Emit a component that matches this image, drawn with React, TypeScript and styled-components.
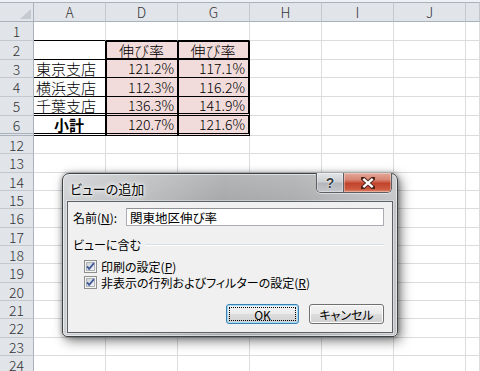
import React from 'react';
import styled, { createGlobalStyle } from 'styled-components';

const Global = createGlobalStyle`
  html, body { margin: 0; padding: 0; background: #fff; }
  body { width: 480px; height: 371px; overflow: hidden; font-family: "Noto Sans CJK JP", "Noto Sans", sans-serif; }
  #root { width: 480px; height: 371px; }
`;

const GRID = '#dadcdd';
const INK = '#000';
const PINK = '#f2dcdb';

const Page = styled.div`
  position: relative;
  width: 480px;
  height: 371px;
  overflow: hidden;
  background: #fff;
`;

const TopBand = styled.div`
  height: 2px;
  background: #eef1f5;
`;

const Sheet = styled.div`
  display: grid;
  grid-template-columns: 34px repeat(6, 72px) 1fr;
  grid-template-rows: 20px 19px 19px 18px 19px 19px 20px 18px 19px 18px 18px 19px 18px 18px 19px 18px 18px 19px 18px 18px;
`;

const HeadCell = styled.div<{ $first?: boolean }>`
  box-sizing: border-box;
  background: #e1e5ea;
  border-top: 1px solid #a9b1bb;
  border-bottom: 1px solid #a9b1bb;
  border-right: 1px solid ${p => (p.$first ? '#a9b1bb' : '#c3c8cf')};
  display: flex;
  align-items: center;
  justify-content: center;
  font-family: "Noto Sans CJK JP", sans-serif;
  font-size: 14px;
  line-height: 16px;
  font-weight: 300;
  color: #333;
`;

const Corner = styled(HeadCell)`
  align-items: flex-end;
  justify-content: flex-end;
  padding: 0 2px 2px 0;
`;

const RowHead = styled.div<{ $double?: boolean }>`
  box-sizing: border-box;
  background: #e1e5ea;
  border-right: 1px solid #a9b1bb;
  border-bottom: ${p => (p.$double ? '3px double #a9b1bb' : '1px solid #c3c8cf')};
  display: flex;
  align-items: center;
  justify-content: center;
  padding-top: 1px;
  font-family: "Noto Sans CJK JP", sans-serif;
  font-size: 14px;
  line-height: 15px;
  font-weight: 300;
  color: #333;
`;

const Cell = styled.div<{
  $t?: string;
  $r?: string;
  $b?: string;
  $l?: string;
  $fill?: string;
  $align?: string;
  $bold?: boolean;
  $num?: boolean;
}>`
  box-sizing: border-box;
  min-width: 0;
  border-top: ${p => p.$t ?? 'none'};
  border-left: ${p => p.$l ?? 'none'};
  border-right: ${p => p.$r ?? `1px solid ${GRID}`};
  border-bottom: ${p => p.$b ?? `1px solid ${GRID}`};
  background: ${p => p.$fill ?? '#fff'};
  display: flex;
  align-items: center;
  justify-content: ${p => p.$align ?? 'flex-start'};
  padding: 0 3px 0 2px;
  font-family: "Noto Sans CJK JP", sans-serif;
  font-size: ${p => (p.$num ? '14px' : '15px')};
  font-weight: ${p => (p.$bold ? 700 : 300)};
  color: #000;
  white-space: nowrap;
  line-height: 15px;
`;

/* ---------- dialog ---------- */

const Dialog = styled.div`
  position: absolute;
  left: 62px;
  top: 173px;
  width: 336px;
  height: 164px;
  box-sizing: border-box;
  border: 1px solid #404346;
  border-radius: 7px 7px 5px 5px;
  background:
    linear-gradient(180deg, rgba(255,255,255,0.18) 0%, rgba(255,255,255,0) 20%),
    linear-gradient(90deg, #cdd0d2 0%, #bfc1c3 18%, #a4a6a8 48%, #a9abad 70%, #c3c5c7 100%);
  box-shadow:
    inset 0 0 0 1px rgba(255, 255, 255, 0.55),
    3px 4px 12px rgba(0, 0, 0, 0.5),
    0 0 5px rgba(0, 0, 0, 0.35);
  padding: 0 4px 3px 4px;
  display: flex;
  flex-direction: column;
  font-family: "Noto Sans CJK JP", sans-serif;
  font-feature-settings: "palt";
`;

const TitleBar = styled.div`
  height: 27px;
  display: flex;
  align-items: flex-start;
  flex-shrink: 0;
`;

const Title = styled.div`
  align-self: center;
  margin-top: 2px;
  padding-left: 3px;
  font-size: 13px;
  color: #000;
  text-shadow: 0 0 4px #fff, 0 0 7px rgba(255, 255, 255, 0.9), 0 0 2px #fff;
`;

const Caption = styled.div`
  margin-left: auto;
  margin-top: -1px;
  margin-right: 1px;
  display: flex;
  height: 19px;
  border: 1px solid #5b5e62;
  border-top: none;
  border-radius: 0 0 5px 5px;
  overflow: hidden;
  box-shadow: 0 1px 0 rgba(255, 255, 255, 0.5);
`;

const CapBtn = styled.div<{ $close?: boolean }>`
  width: ${p => (p.$close ? '47px' : '26px')};
  height: 100%;
  display: flex;
  align-items: center;
  justify-content: center;
  box-shadow: inset 0 0 0 1px rgba(255, 255, 255, 0.35);
  background: ${p =>
    p.$close
      ? 'linear-gradient(180deg, #e3a798 0%, #d98775 35%, #c2432b 55%, #cc5a40 85%, #e08a6d 100%)'
      : 'linear-gradient(180deg, #e2e4e6 0%, #cdd0d3 45%, #b3b6ba 55%, #c3c6ca 100%)'};
  border-left: ${p => (p.$close ? '1px solid #5b5e62' : 'none')};
  font-family: "Liberation Sans", sans-serif;
  font-weight: 700;
  font-size: 14px;
  color: #3a3d40;
  text-shadow: 0 0 2px #fff, 0 0 1px #fff;
`;

const Client = styled.div`
  flex: 1;
  box-sizing: border-box;
  border: 1px solid #5d6064;
  background: #f0f0f0;
  box-shadow: 0 0 0 1px rgba(255, 255, 255, 0.35);
  padding: 6px 8px 8px 5px;
  display: flex;
  flex-direction: column;
  font-size: 12px;
  color: #000;
`;

const NameRow = styled.div`
  display: flex;
  align-items: center;
  height: 18px;
`;

const Label = styled.div`
  width: 53px;
  flex-shrink: 0;
  white-space: nowrap;
`;

const U = styled.span`
  text-decoration: underline;
  text-underline-offset: 1px;
`;

const TextBox = styled.div`
  flex: 1;
  height: 18px;
  box-sizing: border-box;
  border: 1px solid #abadb3;
  border-top-color: #8e9096;
  background: #fff;
  display: flex;
  align-items: center;
  padding-left: 3px;
  font-size: 12.5px;
`;

const GroupHead = styled.div`
  margin-top: 10px;
  height: 16px;
  display: flex;
  align-items: center;
  gap: 5px;
  white-space: nowrap;
`;

const GroupLine = styled.div`
  flex: 1;
  height: 1px;
  background: #d5dfe5;
  box-shadow: 0 1px 0 #fff;
`;

const CheckRow = styled.div<{ $first?: boolean }>`
  margin-top: ${p => (p.$first ? '6px' : '0')};
  margin-left: 11px;
  height: 16px;
  display: flex;
  align-items: center;
  gap: 4px;
  white-space: nowrap;
`;

const Buttons = styled.div`
  margin-top: auto;
  display: flex;
  justify-content: flex-end;
  gap: 10px;
`;

const Button = styled.div<{ $default?: boolean }>`
  position: relative;
  width: ${p => (p.$default ? '73px' : '75px')};
  height: 20px;
  box-sizing: border-box;
  border: 1px solid ${p => (p.$default ? '#3c7fb1' : '#707070')};
  border-radius: 3px;
  background: linear-gradient(180deg, #f2f2f2 0%, #ebebeb 48%, #dddddd 52%, #cfcfcf 100%);
  box-shadow: inset 0 0 0 1px ${p => (p.$default ? '#9fdcf7' : '#fcfcfc')};
  display: flex;
  align-items: center;
  justify-content: center;
  font-size: 12px;
`;

const Focus = styled.span`
  position: absolute;
  inset: 2px;
  border: 1px dotted #000;
`;

function CheckIcon() {
  return (
    <svg width="13" height="13" viewBox="0 0 13 13">
      <defs>
        <linearGradient id="cbg" x1="0" y1="0" x2="1" y2="1">
          <stop offset="0" stopColor="#cbcfd5" />
          <stop offset="1" stopColor="#f7f7f7" />
        </linearGradient>
      </defs>
      <rect x="0.5" y="0.5" width="12" height="12" fill="#f4f4f4" stroke="#8e8f8f" />
      <rect x="2.5" y="2.5" width="8" height="8" fill="url(#cbg)" stroke="#aeb3b9" />
      <path d="M3 6.3 L5.2 8.8 L10 3.2" fill="none" stroke="#3e5a98" strokeWidth="1.8" />
    </svg>
  );
}

function CloseGlyph() {
  return (
    <svg width="14" height="12" viewBox="0 0 14 12">
      <path d="M2 1.5 L12 10.5 M12 1.5 L2 10.5" stroke="#4b1f16" strokeWidth="4.2" strokeLinecap="square" />
      <path d="M2.3 1.8 L11.7 10.2 M11.7 1.8 L2.3 10.2" stroke="#fff" strokeWidth="2.4" />
    </svg>
  );
}

const Triangle = () => (
  <svg width="11" height="10" viewBox="0 0 11 10">
    <polygon points="11,0 11,10 0,10" fill="#c5cad0" />
  </svg>
);

const cols = ['A', 'D', 'G', 'H', 'I', 'J', ''];
const rows: { n: number; double?: boolean }[] = [
  { n: 1 }, { n: 2 }, { n: 3 }, { n: 4 }, { n: 5 }, { n: 6, double: true },
  { n: 12 }, { n: 13 }, { n: 14 }, { n: 15 }, { n: 16 }, { n: 17 }, { n: 18 },
  { n: 19 }, { n: 20 }, { n: 21 }, { n: 22 }, { n: 23 }, { n: 24 },
];

const data: Record<number, [string, string, string]> = {
  2: ['', '伸び率', '伸び率'],
  3: ['東京支店', '121.2%', '117.1%'],
  4: ['横浜支店', '112.3%', '116.2%'],
  5: ['千葉支店', '136.3%', '141.9%'],
  6: ['小計', '120.7%', '121.6%'],
};

const thin = `1px solid ${INK}`;
const thick = `2px solid ${INK}`;
const dbl = `3px double ${INK}`;

function renderCell(row: number, col: number) {
  const key = `${row}-${col}`;
  if (col > 2) return <Cell key={key} />;
  if (row === 1) return <Cell key={key} $b={thin} />;
  const d = data[row];
  if (!d) return <Cell key={key} />;
  const bottom = row === 5 || row === 6 ? dbl : row === 2 && col > 0 ? thick : thin;
  if (col === 0) {
    return (
      <Cell key={key} $r={thin} $b={bottom} $bold={row === 6} $align={row === 6 ? 'center' : 'flex-start'}>
        {d[0]}
      </Cell>
    );
  }
  const header = row === 2;
  return (
    <Cell
      key={key}
      $t={header ? thin : undefined}
      $l={thin}
      $r={col === 2 ? thick : thin}
      $b={bottom}
      $fill={PINK}
      $align={header ? 'center' : 'flex-end'}
      $num={!header}
    >
      {d[col]}
    </Cell>
  );
}

export default function App() {
  return (
    <Page>
      <Global />
      <TopBand />
      <Sheet>
        <Corner $first>
          <Triangle />
        </Corner>
        {cols.map(c => (
          <HeadCell key={c || 'k'}>{c}</HeadCell>
        ))}
        {rows.map(r => (
          <React.Fragment key={r.n}>
            <RowHead $double={r.double}>{r.n}</RowHead>
            {cols.map((_, ci) => renderCell(r.n, ci))}
          </React.Fragment>
        ))}
      </Sheet>

      <Dialog>
        <TitleBar>
          <Title>ビューの追加</Title>
          <Caption>
            <CapBtn>?</CapBtn>
            <CapBtn $close>
              <CloseGlyph />
            </CapBtn>
          </Caption>
        </TitleBar>
        <Client>
          <NameRow>
            <Label>
              名前(<U>N</U>):
            </Label>
            <TextBox>関東地区伸び率</TextBox>
          </NameRow>
          <GroupHead>
            <span>ビューに含む</span>
            <GroupLine />
          </GroupHead>
          <CheckRow $first>
            <CheckIcon />
            <span>
              印刷の設定(<U>P</U>)
            </span>
          </CheckRow>
          <CheckRow>
            <CheckIcon />
            <span>
              非表示の行列およびフィルターの設定(<U>R</U>)
            </span>
          </CheckRow>
          <Buttons>
            <Button $default>
              <Focus />
              OK
            </Button>
            <Button>キャンセル</Button>
          </Buttons>
        </Client>
      </Dialog>
    </Page>
  );
}
